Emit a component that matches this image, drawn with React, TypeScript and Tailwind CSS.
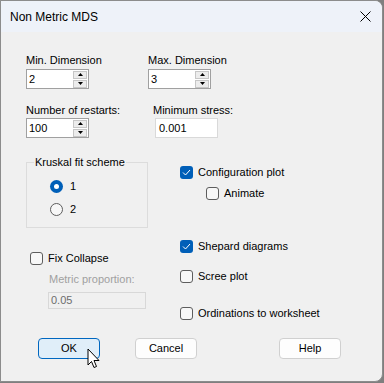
import React from 'react';

const font = { fontFamily: '"Liberation Sans", Arial, sans-serif' };

function Spin({ value }: { value: string }) {
  return (
    <div className="flex h-[20px] w-[63px] items-center border border-[#a0a0a0] bg-white pl-[2px] pr-[1px]">
      <span className="flex-1 text-[11px] text-black">{value}</span>
      <div className="flex flex-col gap-[1px]">
        <div className="flex h-[8px] w-[14px] items-center justify-center border border-[#c6c6c6] bg-[#ececec]">
          <svg width="5" height="3" viewBox="0 0 5 3">
            <path d="M2.5 0 L5 3 L0 3 Z" fill="#000" />
          </svg>
        </div>
        <div className="flex h-[8px] w-[14px] items-center justify-center border border-[#c6c6c6] bg-[#ececec]">
          <svg width="5" height="3" viewBox="0 0 5 3">
            <path d="M0 0 L5 0 L2.5 3 Z" fill="#000" />
          </svg>
        </div>
      </div>
    </div>
  );
}

function Check({ checked, label }: { checked?: boolean; label: string }) {
  return (
    <div className="flex h-[13px] items-center gap-[5px]">
      {checked ? (
        <div className="flex h-[13px] w-[13px] items-center justify-center rounded-[3px] bg-[#005fb8]">
          <svg width="9" height="7" viewBox="0 0 9 7">
            <path d="M1 3.5 L3.5 6 L8 1" stroke="#fff" strokeWidth="1" fill="none" />
          </svg>
        </div>
      ) : (
        <div className="h-[13px] w-[13px] rounded-[3px] border border-[#5d5d5d] bg-[#f7f7f7]" />
      )}
      <span className="text-[11px] leading-[13px] text-black">{label}</span>
    </div>
  );
}

function Radio({ selected, label }: { selected?: boolean; label: string }) {
  return (
    <div className="flex h-[13px] items-center gap-[7px]">
      {selected ? (
        <div className="flex h-[13px] w-[13px] items-center justify-center rounded-full bg-[#005fb8]">
          <div className="h-[5px] w-[5px] rounded-full bg-white" />
        </div>
      ) : (
        <div className="h-[13px] w-[13px] rounded-full border border-[#5d5d5d] bg-[#f7f7f7]" />
      )}
      <span className="text-[11px] leading-[13px] text-black">{label}</span>
    </div>
  );
}

function Button({ label, primary }: { label: string; primary?: boolean }) {
  return (
    <div
      className={`flex h-[21px] w-[62px] items-center justify-center rounded-[4px] text-[11px] text-black ${
        primary ? 'border border-[#0067c0] bg-[#e0eef9]' : 'border border-[#d0d0d0] bg-[#fdfdfd]'
      }`}
    >
      {label}
    </div>
  );
}

export default function App() {
  return (
    <div className="h-[383px] w-[384px] bg-[#7f7f7f]" style={font}>
      <div className="relative flex h-[382px] w-[383px] flex-col overflow-hidden rounded-r-[8px] border border-[#8c8c8c] bg-[#f0f0f0]">
        {/* title bar */}
        <div className="flex h-[31px] items-center justify-between bg-[#eef2f9] pl-[9px] pr-[11px]">
          <span className="text-[12px] text-black">Non Metric MDS</span>
          <svg width="11" height="11" viewBox="0 0 11 11">
            <path d="M0.5 0.5 L10.5 10.5 M10.5 0.5 L0.5 10.5" stroke="#000" strokeWidth="1" />
          </svg>
        </div>

        <div className="flex flex-col pl-[25px] pt-[21px]">
          {/* row 1 */}
          <div className="flex">
            <div className="w-[122px]">
              <div className="h-[14px] text-[11px] leading-[14px]">Min. Dimension</div>
              <div className="mt-[2px]">
                <Spin value="2" />
              </div>
            </div>
            <div>
              <div className="h-[14px] text-[11px] leading-[14px]">Max. Dimension</div>
              <div className="mt-[2px]">
                <Spin value="3" />
              </div>
            </div>
          </div>

          {/* row 2 */}
          <div className="mt-[14px] flex">
            <div className="w-[127px]">
              <div className="h-[14px] text-[11px] leading-[14px]">Number of restarts:</div>
              <div className="mt-[1px]">
                <Spin value="100" />
              </div>
            </div>
            <div>
              <div className="h-[14px] text-[11px] leading-[14px]">Minimum stress:</div>
              <div className="ml-[2px] mt-[1px] flex h-[20px] w-[63px] items-center border border-[#d9d9d9] bg-white pl-[3px] text-[11px]">
                0.001
              </div>
            </div>
          </div>

          {/* options */}
          <div className="flex h-[200px]">
            <div className="w-[154px]">
              <div className="relative mt-[24px] h-[66px] w-[122px] border border-[#dcdcdc]">
                <span className="absolute -top-[8px] left-[7px] bg-[#f0f0f0] px-[1px] text-[11px] leading-[14px]">
                  Kruskal fit scheme
                </span>
                <div className="flex flex-col gap-[10px] pl-[23px] pt-[17px]">
                  <Radio selected label="1" />
                  <Radio label="2" />
                </div>
              </div>
              <div className="ml-[4px] mt-[24px]">
                <Check label="Fix Collapse" />
              </div>
              <div className="ml-[23px] mt-[7px] h-[14px] text-[11px] leading-[14px] text-[#a0a0a0]">
                Metric proportion:
              </div>
              <div className="ml-[22px] mt-[6px] flex h-[17px] w-[98px] items-center border border-[#d8d8d8] bg-[#f0f0f0] pl-[2px] text-[11px] text-[#6d6d6d]">
                0.05
              </div>
            </div>
            <div className="flex flex-col">
              <div className="mt-[28px]">
                <Check checked label="Configuration plot" />
              </div>
              <div className="ml-[26px] mt-[8px]">
                <Check label="Animate" />
              </div>
              <div className="mt-[40px]">
                <Check checked label="Shepard diagrams" />
              </div>
              <div className="mt-[17px]">
                <Check label="Scree plot" />
              </div>
              <div className="mt-[24px]">
                <Check label="Ordinations to worksheet" />
              </div>
            </div>
          </div>

          {/* buttons */}
          <div className="flex pl-[12px]">
            <Button primary label="OK" />
            <div className="ml-[35px]">
              <Button label="Cancel" />
            </div>
            <div className="ml-[82px]">
              <Button label="Help" />
            </div>
          </div>
        </div>

        {/* mouse cursor */}
        <svg className="absolute left-[86px] top-[347px]" width="13" height="22" viewBox="0 0 13 22">
          <path
            d="M1 1 L1 17 L4.5 13.5 L7 19.5 L9.5 18.5 L7 12.5 L12 12.5 Z"
            fill="#fff"
            stroke="#000"
            strokeWidth="1"
            strokeLinejoin="round"
          />
        </svg>
      </div>
    </div>
  );
}
